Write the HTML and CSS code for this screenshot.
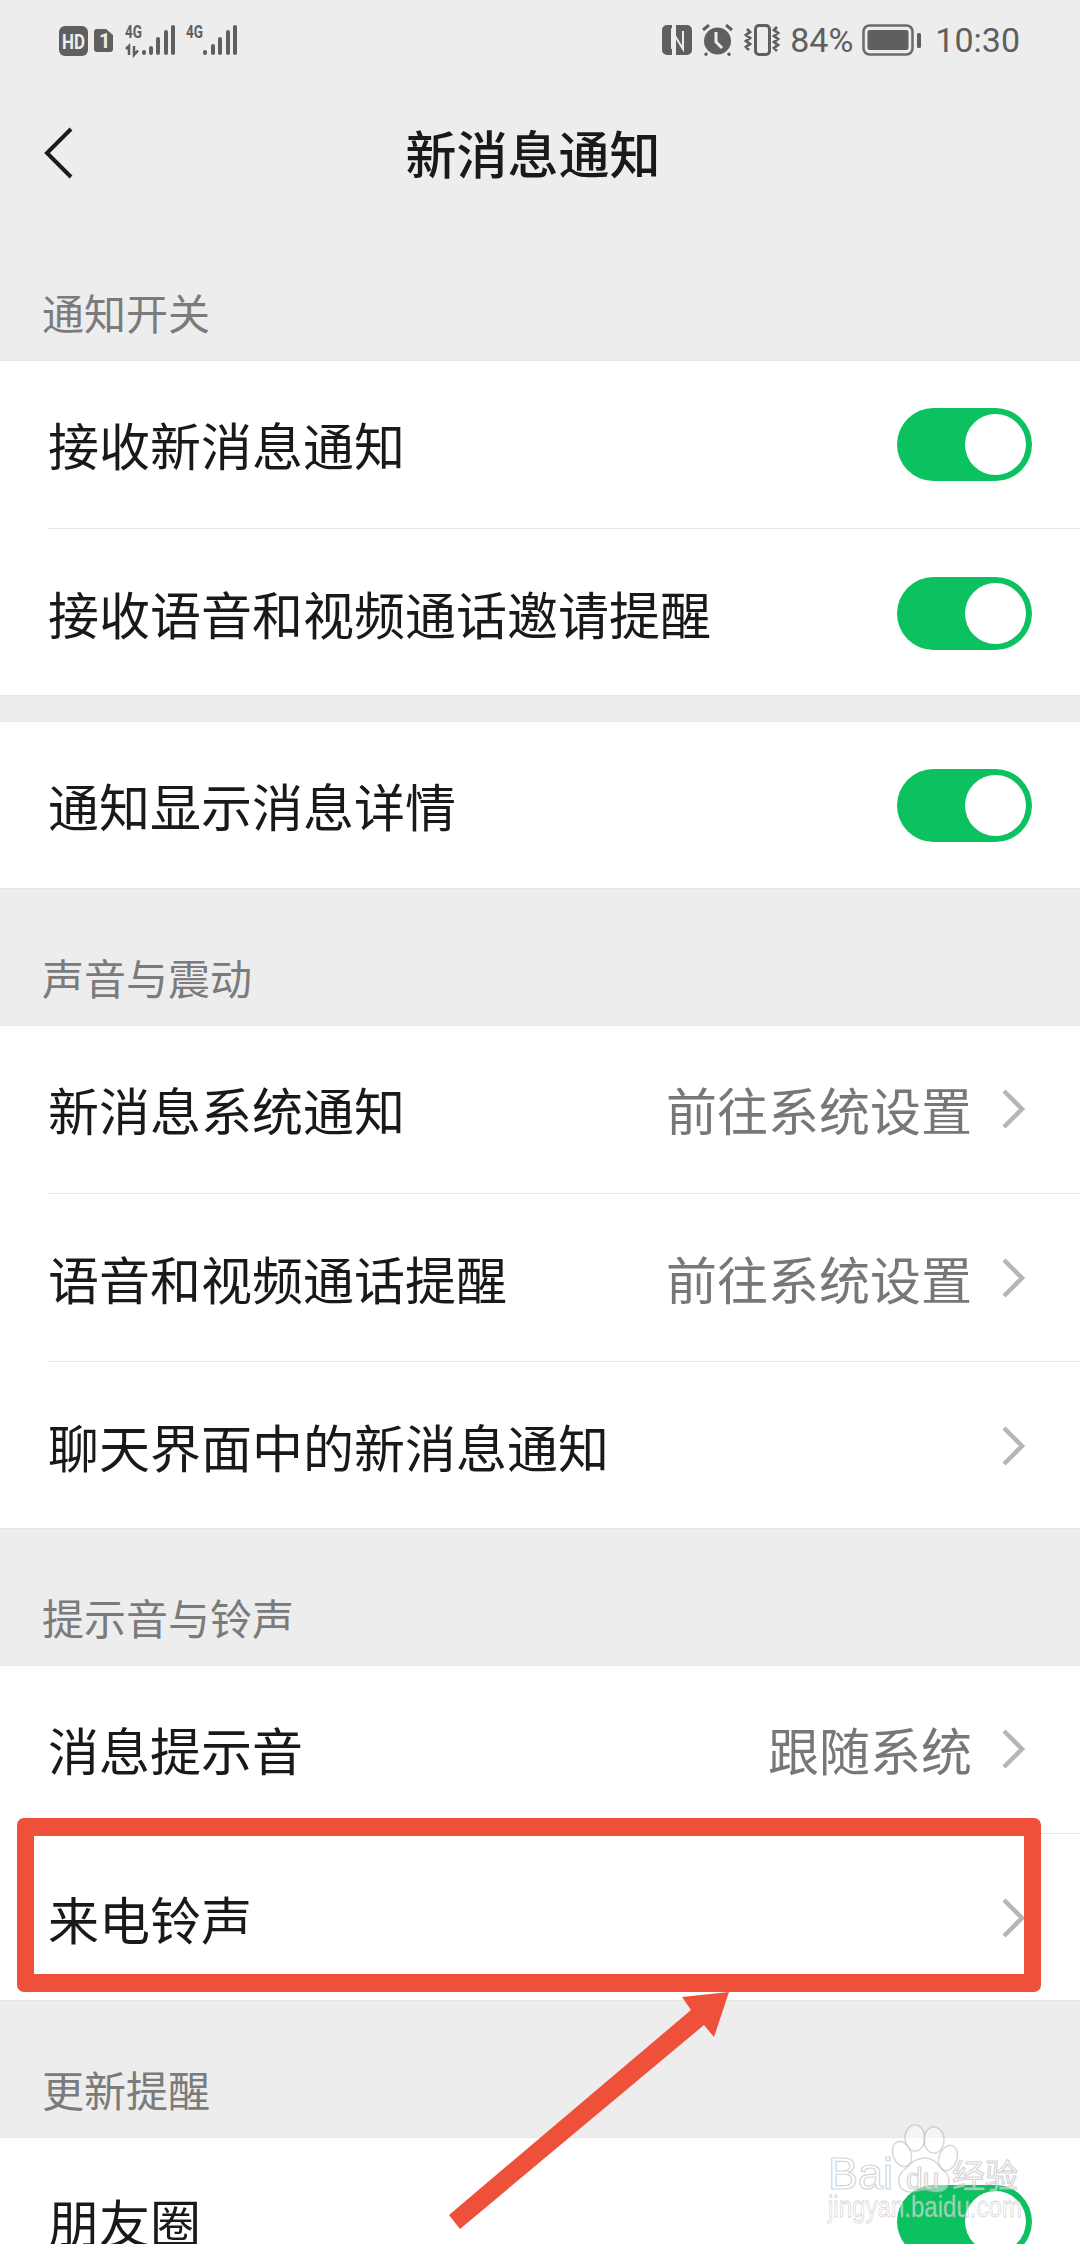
FILE: index.html
```html
<!DOCTYPE html>
<html lang="zh-CN">
<head>
<meta charset="utf-8">
<title>新消息通知</title>
<link rel="stylesheet" href="styles.css">
</head>
<body>
<div class="page">
  <div class="status">
    <svg class="status-left" width="180" height="36" viewBox="59 24 180 36">
      <rect x="59" y="26" width="29" height="30" rx="6" fill="#5f5f5f"/>
      <text x="62" y="48.500" class="hd" textLength="23" lengthAdjust="spacingAndGlyphs">HD</text>
      <path d="M97 29h9l7 6v14a3 3 0 0 1-3 3H97a3 3 0 0 1-3-3V32a3 3 0 0 1 3-3z" fill="#5f5f5f"/>
      <text x="99" y="48" class="hd">1</text>
      <text x="125" y="38" class="net" textLength="17" lengthAdjust="spacingAndGlyphs">4G</text>
      <text x="186" y="38" class="net" textLength="17" lengthAdjust="spacingAndGlyphs">4G</text>
      <path d="M129 55v-9l-3 3M134 46v9l4-4.500" fill="none" stroke="#5f5f5f" stroke-width="2.500"/>
      <g fill="#5f5f5f">
        <rect x="142" y="50" width="4" height="5" rx="2"/><rect x="149" y="46" width="4" height="9" rx="2"/><rect x="156" y="37" width="4" height="18" rx="2"/><rect x="164" y="30" width="4" height="25" rx="2"/><rect x="171" y="25" width="4" height="30" rx="2"/>
        <rect x="203" y="50" width="4" height="5" rx="2"/><rect x="211" y="44" width="4" height="11" rx="2"/><rect x="218" y="37" width="4" height="18" rx="2"/><rect x="226" y="30" width="4" height="25" rx="2"/><rect x="233" y="25" width="4" height="30" rx="2"/>
      </g>
    </svg>
    <div class="status-right">
      <svg width="30" height="32" viewBox="0 0 30 32">
        <path d="M5 1h5v30H5a5 5 0 0 1-5-5V6a5 5 0 0 1 5-5zM14 1h11a5 5 0 0 1 5 5v20a5 5 0 0 1-5 5H14z" fill="#5f5f5f"/>
        <path d="M10 25V7l11 18V7" fill="none" stroke="#ededed" stroke-width="2"/>
      </svg>
      <svg width="33" height="32" viewBox="0 0 33 32">
        <circle cx="16.500" cy="17" r="13.500" fill="#5f5f5f"/>
        <path d="M15 8v10l6 6" fill="none" stroke="#ededed" stroke-width="3"/>
        <path d="M2 6l6-5M31 6l-6-5M6 29l-2 2.500M27 29l2 2.500" stroke="#5f5f5f" stroke-width="3" fill="none"/>
      </svg>
      <svg width="38" height="32" viewBox="0 0 38 32">
        <rect x="12.500" y="1.500" width="14" height="29" rx="3.500" fill="none" stroke="#5f5f5f" stroke-width="3"/>
        <path d="M4 5l3 3-4 3 4 3-4 3 4 3-4 3 3 3M34 3l-3 3 4 3-4 3 4 3-4 3 4 3-4 3 3 3" fill="none" stroke="#5f5f5f" stroke-width="2.800"/>
      </svg>
      <span class="pct">84%</span>
      <svg width="59" height="32" viewBox="0 0 59 32">
        <rect x="1.500" y="1.500" width="49" height="29" rx="6" fill="none" stroke="#6a6a6a" stroke-width="2.500"/>
        <rect x="5.500" y="6" width="41" height="20" rx="2" fill="#5f5f5f"/>
        <rect x="55" y="9" width="4" height="15" rx="1.500" fill="#5f5f5f"/>
      </svg>
      <span class="time">10:30</span>
    </div>
  </div>

  <div class="nav">
    <svg class="back" width="30" height="52" viewBox="0 0 30 52"><path d="M27 2L3 26l24 24" fill="none" stroke="#1c1c1c" stroke-width="4"/></svg>
    <h1 class="title">新消息通知</h1>
  </div>

  <div class="label label-first">通知开关</div>
  <div class="card">
    <div class="row"><span class="name">接收新消息通知</span><span class="toggle"></span></div>
    <div class="row"><span class="name">接收语音和视频通话邀请提醒</span><span class="toggle"></span></div>
  </div>
  <div class="card card-gap">
    <div class="row"><span class="name">通知显示消息详情</span><span class="toggle"></span></div>
  </div>

  <div class="label">声音与震动</div>
  <div class="card">
    <div class="row"><span class="name">新消息系统通知</span><span class="value">前往系统设置</span><svg class="chev" width="24" height="40" viewBox="0 0 24 40"><path d="M2 2l18 18L2 38"/></svg></div>
    <div class="row"><span class="name">语音和视频通话提醒</span><span class="value">前往系统设置</span><svg class="chev" width="24" height="40" viewBox="0 0 24 40"><path d="M2 2l18 18L2 38"/></svg></div>
    <div class="row"><span class="name">聊天界面中的新消息通知</span><svg class="chev" width="24" height="40" viewBox="0 0 24 40"><path d="M2 2l18 18L2 38"/></svg></div>
  </div>

  <div class="label">提示音与铃声</div>
  <div class="card">
    <div class="row"><span class="name">消息提示音</span><span class="value">跟随系统</span><svg class="chev" width="24" height="40" viewBox="0 0 24 40"><path d="M2 2l18 18L2 38"/></svg></div>
    <div class="row"><span class="name">来电铃声</span><svg class="chev" width="24" height="40" viewBox="0 0 24 40"><path d="M2 2l18 18L2 38"/></svg></div>
  </div>

  <div class="label">更新提醒</div>
  <div class="card">
    <div class="row"><span class="name">朋友圈</span><span class="toggle"></span></div>
  </div>

  <div class="redbox"></div>
  <svg class="overlay" width="1080" height="2244" viewBox="0 0 1080 2244">
    <polygon points="729,1992 682,1997 691,2010 449,2215 460,2229 704,2025 714,2037" fill="#ee5039"/>
    <g class="wm-shape">
      <ellipse cx="915" cy="2138" rx="10" ry="13"/>
      <ellipse cx="934" cy="2140" rx="10" ry="13"/>
      <ellipse cx="902" cy="2154" rx="9" ry="13" transform="rotate(-20 902 2154)"/>
      <ellipse cx="948" cy="2158" rx="9" ry="13" transform="rotate(20 948 2158)"/>
      <path d="M925 2158c10 0 14 8 20 14 7 7 5 20-8 20-6 0-8-2-13-2s-8 3-14 2c-13-1-14-14-7-21 7-6 11-13 22-13z"/>
    </g>
    <text x="828" y="2189" class="wm wm-big" textLength="65" lengthAdjust="spacingAndGlyphs">Bai</text>
    <text x="906" y="2189" class="wm wm-du">du</text>
    <text x="952" y="2188" class="wm wm-cn">经验</text>
    <text x="828" y="2217" class="wm wm-url" textLength="194" lengthAdjust="spacingAndGlyphs">jingyan.baidu.com</text>
  </svg>
</div>
</body>
</html>
```
FILE: styles.css
```css
* { box-sizing: border-box; }
html, body { margin: 0; padding: 0; }
body { background: #ededed; font-family: "Noto Sans CJK SC", "Noto Sans", sans-serif; }
.page { position: relative; width: 1080px; height: 2244px; overflow: hidden; background: #ededed; }

.status { display: flex; justify-content: space-between; align-items: flex-start; height: 80px; padding: 24px 60px 0 59px; color: #5f5f5f; font-family: Roboto, sans-serif; }
.status-left { display: block; }
.status-left .hd { font: 700 20px Roboto, sans-serif; fill: #ededed; }
.status-left .net { font: 700 18px Roboto, sans-serif; fill: #5f5f5f; }
.status-right { display: flex; align-items: center; gap: 9px; height: 32px; }
.pct, .time { font-size: 34px; line-height: 32px; }
.time { margin-left: 5px; }

.nav { position: relative; display: flex; align-items: center; height: 150px; padding-left: 44px; }
.back { display: block; margin-top: -4px; }
.title { position: absolute; left: 0; top: -3px; width: 1066px; margin: 0; text-align: center; font-size: 51px; line-height: 150px; font-weight: 500; color: #191919; }

.label { display: flex; align-items: flex-end; height: 136px; padding: 0 0 20px 42px; font-size: 42px; line-height: 56px; color: #7b7b7b; }
.label-first { height: 130px; }

.card { background: #fff; box-shadow: inset 0 -1px 0 #e4e4e4, inset 0 1px 0 #e8e8e8; }
.card-gap { margin-top: 25px; }
.row { display: flex; align-items: center; height: 168px; margin-left: 48px; padding-right: 48px; }
.row + .row { border-top: 1px solid #e6e6e6; }
.name { flex: 1; font-size: 51px; line-height: 70px; color: #191919; }
.value { font-size: 51px; line-height: 70px; color: #777; margin-right: 30px; }
.chev { display: block; fill: none; stroke: #b6b6b6; stroke-width: 4.500px; margin-right: 6px; }
.toggle { position: relative; display: block; width: 135px; height: 73px; border-radius: 37px; background: #0bc160; margin-top: 1px; }
.toggle::after { content: ""; position: absolute; top: 6px; right: 6px; width: 61px; height: 61px; border-radius: 50%; background: #fff; }

.redbox { position: absolute; left: 17px; top: 1818px; width: 1024px; height: 174px; border: solid #ee5039; border-width: 18px 17px; border-radius: 7px; }
.overlay { position: absolute; left: 0; top: 0; }
.wm-shape { fill: rgba(255,255,255,.45); stroke: rgba(170,170,170,.45); stroke-width: 1.500; }
.wm { fill: rgba(255,255,255,.55); stroke: rgba(170,170,170,.5); stroke-width: 1.200; font-family: "Liberation Sans", sans-serif; }
.wm-big { font-size: 44px; }
.wm-du { font-size: 30px; }
.wm-cn { font-size: 33px; font-family: "Noto Sans CJK SC", sans-serif; }
.wm-url { font-size: 29px; stroke-width: .8; }
```
